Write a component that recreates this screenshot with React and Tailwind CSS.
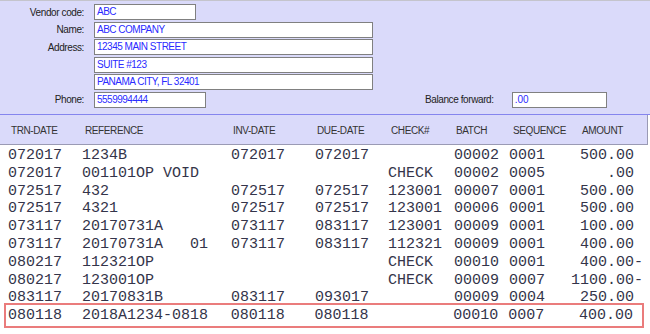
import React from "react";

const rows = [
  ["072017", "1234B", "072017", "072017", "", "00002", "0001", "500.00 "],
  ["072017", "001101OP VOID", "", "", "CHECK", "00002", "0005", ".00 "],
  ["072517", "432", "072517", "072517", "123001", "00007", "0001", "500.00 "],
  ["072517", "4321", "072517", "072517", "123001", "00006", "0001", "500.00 "],
  ["073117", "20170731A", "073117", "083117", "123001", "00009", "0001", "100.00 "],
  ["073117", "20170731A   01", "073117", "083117", "112321", "00009", "0001", "400.00 "],
  ["080217", "112321OP", "", "", "CHECK", "00010", "0001", "400.00-"],
  ["080217", "123001OP", "", "", "CHECK", "00009", "0007", "1100.00-"],
  ["083117", "20170831B", "083117", "093017", "", "00009", "0004", "250.00 "],
];

const lastRow = ["080118", "2018A1234-0818", "080118", "080118", "", "00010", "0007", "400.00 "];

const Field = ({ label, value, width }) => (
  <div className="flex items-center h-4">
    <div className="w-[85px] text-right pr-px text-[10px] tracking-[-0.4px] text-[#222]">{label}</div>
    <div
      className={`ml-[9px] h-4 bg-white border border-[#808080] pl-[2px] text-[10px] tracking-[-0.5px] leading-[14px] text-[#2a2aff] ${width}`}
    >
      {value}
    </div>
  </div>
);

const DataRow = ({ r }) => (
  <div className="flex whitespace-pre h-[17.8px] leading-[17.8px]">
    <div className="w-[74px]">{r[0]}</div>
    <div className="w-[149px]">{r[1]}</div>
    <div className="w-[84px]">{r[2]}</div>
    <div className="w-[73px]">{r[3]}</div>
    <div className="w-[66px]">{r[4]}</div>
    <div className="w-[55px]">{r[5]}</div>
    <div className="w-[55px]">{r[6]}</div>
    <div className="w-[79px] text-right">{r[7]}</div>
  </div>
);

export default function App() {
  return (
    <div className="w-[650px] h-[334px] overflow-hidden bg-white font-['Liberation_Sans',Arial,sans-serif]">
      {/* vendor header form */}
      <div className="h-[115px] bg-[#dadafa] border-t border-[#c4c4cc] border-b border-b-[#8585ee] pt-[3px] flex flex-col gap-[1.6px]">
        <Field label="Vendor code:" value="ABC" width="w-[102px]" />
        <Field label="Name:" value="ABC COMPANY" width="w-[279px]" />
        <Field label="Address:" value="12345 MAIN STREET" width="w-[279px]" />
        <Field label="" value="SUITE #123" width="w-[279px]" />
        <Field label="" value="PANAMA CITY, FL 32401" width="w-[279px]" />
        <div className="flex items-center">
          <Field label="Phone:" value="5559994444" width="w-[112px]" />
          <div className="ml-[219px] text-[10px] tracking-[-0.4px] text-[#222]">Balance forward:</div>
          <div className="ml-[18px] w-[95px] h-4 bg-white border border-[#808080] pl-[2px] text-[10px] leading-[14px] text-[#2a2aff]">
            .00
          </div>
        </div>
      </div>

      {/* column headings */}
      <div className="h-[30px] w-[648px] bg-[#dadafa] border-b border-r border-[#9a9ab4] flex items-center pt-[2px] pl-[11px] text-[10px] tracking-[-0.4px] text-[#333]">
        <div className="w-[74px]">TRN-DATE</div>
        <div className="w-[148px]">REFERENCE</div>
        <div className="w-[84px]">INV-DATE</div>
        <div className="w-[74px]">DUE-DATE</div>
        <div className="w-[65px]">CHECK#</div>
        <div className="w-[57px]">BATCH</div>
        <div className="w-[69px]">SEQUENCE</div>
        <div>AMOUNT</div>
      </div>

      {/* transactions */}
      <div className="pt-[2px] font-['Liberation_Mono','Courier_New',monospace] text-[15px] text-[#34344a]">
        {rows.map((r, i) => (
          <div key={i} className="pl-[8px]">
            <DataRow r={r} />
          </div>
        ))}
        <div className="ml-[4px] mt-[-4px] w-[640px] border-2 border-[#ea7c7c] pl-[2px] pt-[2px] pb-px">
          <DataRow r={lastRow} />
        </div>
      </div>
    </div>
  );
}
